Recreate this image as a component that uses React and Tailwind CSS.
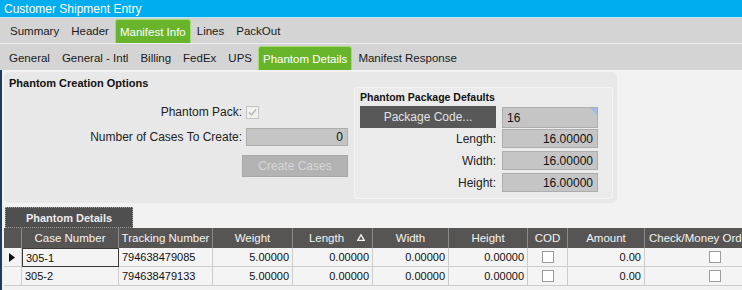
import React from "react";

function Tab({ children, active }) {
  if (active) {
    return (
      <div className="h-[24px] px-[4px] flex items-center rounded-t-[3px] bg-[#68b52c] border border-b-0 border-[#a3d977] text-white">
        {children}
      </div>
    );
  }
  return <div className="h-[24px] px-[6px] flex items-center text-[#1a1a1a]">{children}</div>;
}

function Field({ children, left, corner, h = "h-[19px]" }) {
  return (
    <div className={`relative w-[96px] ${h} bg-[#c5c5c5] border border-[#adadad] flex items-center px-[4px] text-[#111] ${left ? "justify-start" : "justify-end"}`}>
      {children}
      {corner && (
        <svg className="absolute right-0 top-0" width="7" height="7" viewBox="0 0 7 7">
          <polygon points="0,0 7,0 7,7" fill="#9fbde3" />
        </svg>
      )}
    </div>
  );
}

function Check() {
  return <div className="w-[12px] h-[12px] bg-white border border-[#9c9c9c]" />;
}

const cols = "grid grid-cols-[18px_97px_94px_80px_80px_76px_79px_40px_77px_140px]";

export default function App() {
  const rows = [
    { c: "305-1", t: "794638479085" },
    { c: "305-2", t: "794638479133" },
  ];
  const cell = "border-r border-b border-[#cccccc] flex items-center";
  return (
    <div className="w-[742px] h-[290px] overflow-hidden bg-[#f2f2f2] font-['Liberation_Sans',Arial,sans-serif] text-[12px] leading-[14px]">
      <div className="h-[17px] bg-[#00adef] text-white pl-[4px] flex items-center">Customer Shipment Entry</div>
      <div className="h-[1px] bg-[#b9e6f8]" />
      <div className="h-[25px] bg-[#d4d4d4] flex items-end pl-[4px] text-[11.5px]">
        <Tab>Summary</Tab>
        <Tab>Header</Tab>
        <Tab active>Manifest Info</Tab>
        <Tab>Lines</Tab>
        <Tab>PackOut</Tab>
      </div>
      <div className="h-[1px] bg-[#eeeeee]" />
      <div className="h-[26px] bg-[#d4d4d4] flex items-end pl-[3px] text-[11.5px]">
        <Tab>General</Tab>
        <Tab>General - Intl</Tab>
        <Tab>Billing</Tab>
        <Tab>FedEx</Tab>
        <Tab>UPS</Tab>
        <Tab active>Phantom Details</Tab>
        <Tab>Manifest Response</Tab>
      </div>

      <div className="h-[220px] border-l-2 border-[#1f3b5c] pl-[2px] pt-[2px]">
        <div className="w-[613px] h-[131px] bg-[#e8e8e8] rounded-[5px] flex">
          <div className="w-[350px] flex flex-col">
            <div className="pl-[5px] pt-[4px] h-[18px] font-bold text-[11px] text-[#111]">Phantom Creation Options</div>
            <div className="mt-[15px] flex items-center justify-end pr-[95px] h-[14px]">
              <span className="text-[#222] mr-[4px]">Phantom Pack:</span>
              <div className="w-[13px] h-[13px] border border-[#c4c4c4] bg-[#f0f0f0] flex items-center justify-center">
                <svg width="11" height="11" viewBox="0 0 11 11">
                  <path d="M2 5.5 L4.5 8 L9 2.5" stroke="#b5b5b5" strokeWidth="1.4" fill="none" />
                </svg>
              </div>
            </div>
            <div className="mt-[9px] flex items-center justify-end pr-[6px]">
              <span className="text-[#222] mr-[4px]">Number of Cases To Create:</span>
              <div className="w-[102px] h-[18px] bg-[#c5c5c5] border border-[#adadad] flex items-center justify-end px-[4px] text-[#111]">0</div>
            </div>
            <div className="mt-[9px] flex justify-end pr-[6px]">
              <div className="w-[106px] h-[22px] bg-[#b3b3b3] border border-[#a8a8a8] flex items-center justify-center text-[#d6d6d6]">Create Cases</div>
            </div>
          </div>
          <div className="mt-[15px] w-[259px] h-[112px] border border-[#f4f4f4] rounded-[3px] bg-[#ebebeb] pl-[5px] pt-[1px]">
            <div className="font-bold text-[10.5px] text-[#111] h-[16px] flex items-center">Phantom Package Defaults</div>
            <div className="flex mt-[1px] items-start">
              <div className="w-[136px] h-[22px] bg-[#585858] flex items-center justify-center text-[#e2e2e2]">Package Code...</div>
              <div className="ml-[6px] mt-[1px]">
                <Field left corner h="h-[21px]">16</Field>
              </div>
            </div>
            <div className="flex items-center mt-[1px]">
              <div className="w-[136px] text-right text-[#222]">Length:</div>
              <div className="ml-[6px]"><Field>16.00000</Field></div>
            </div>
            <div className="flex items-center mt-[3px]">
              <div className="w-[136px] text-right text-[#222]">Width:</div>
              <div className="ml-[6px]"><Field>16.00000</Field></div>
            </div>
            <div className="flex items-center mt-[3px]">
              <div className="w-[136px] text-right text-[#222]">Height:</div>
              <div className="ml-[6px]"><Field>16.00000</Field></div>
            </div>
          </div>
        </div>

        <div className="mt-[4px] ml-[1px] w-[128px] h-[21px] bg-[#4f4f4f] border border-dotted border-[#9a9a9a] flex items-center justify-center text-[#ececec] font-bold text-[11px]">
          Phantom Details
        </div>

        <div className={`${cols} h-[20px] bg-[#575553] text-[#f4f4f4] text-[11.5px]`}>
          <div className="border-r border-[#8a8a8a]" />
          {["Case Number", "Tracking Number", "Weight"].map((h) => (
            <div key={h} className="border-r border-[#8a8a8a] flex items-center justify-center whitespace-nowrap">{h}</div>
          ))}
          <div className="relative border-r border-[#8a8a8a] flex items-center justify-center pr-[12px]">
            Length
            <svg className="absolute right-[7px] top-[6px]" width="8" height="7" viewBox="0 0 8 7">
              <polygon points="4,0.8 7.3,6.3 0.7,6.3" fill="none" stroke="#f4f4f4" strokeWidth="1.3" />
            </svg>
          </div>
          {["Width", "Height", "COD", "Amount"].map((h) => (
            <div key={h} className="border-r border-[#8a8a8a] flex items-center justify-center whitespace-nowrap">{h}</div>
          ))}
          <div className="border-r border-[#8a8a8a] flex items-center pl-[4px] whitespace-nowrap overflow-hidden">Check/Money Order</div>
        </div>

        {rows.map((r, i) => (
          <div key={r.c} className={`${cols} h-[19px] bg-[#f4f4f4] text-[#111] text-[11px]`}>
            <div className={`${cell} pl-[5px]`}>
              {i === 0 && (
                <svg width="6" height="9" viewBox="0 0 6 9"><polygon points="0,0 6,4.5 0,9" fill="#111" /></svg>
              )}
            </div>
            <div className={`flex items-center pl-[3px] ${i === 0 ? "border border-[#3a3a3a]" : "border-r border-b border-[#cccccc]"}`}>{r.c}</div>
            <div className={`${cell} pl-[3px]`}>{r.t}</div>
            <div className={`${cell} justify-end pr-[3px]`}>5.00000</div>
            <div className={`${cell} justify-end pr-[3px]`}>0.00000</div>
            <div className={`${cell} justify-end pr-[3px]`}>0.00000</div>
            <div className={`${cell} justify-end pr-[3px]`}>0.00000</div>
            <div className={`${cell} justify-center`}><Check /></div>
            <div className={`${cell} justify-end pr-[3px]`}>0.00</div>
            <div className={`${cell} justify-center`}><Check /></div>
          </div>
        ))}
      </div>
    </div>
  );
}
